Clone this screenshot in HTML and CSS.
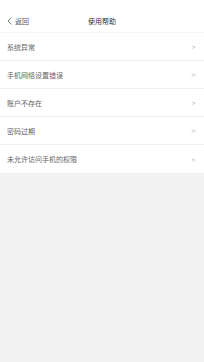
FILE: index.html
```html
<!DOCTYPE html>
<html lang="zh">
<head>
  <meta charset="UTF-8">
  <title>使用帮助</title>
  <link rel="stylesheet" href="styles.css">
</head>
<body>
  <div class="page">
    <div class="nav">
      <div class="back">
        <svg class="back-icon" width="5" height="8" viewBox="0 0 5 8"><path d="M4.2 0.6 L1 4 L4.2 7.4" fill="none" stroke="#555" stroke-width="0.8"/></svg>
        <span>返回</span>
      </div>
      <div class="title">使用帮助</div>
    </div>

    <ul class="help-list">
      <li class="help-item"><span>系统异常</span><span class="arrow">&gt;</span></li>
      <li class="help-item"><span>手机网络设置错误</span><span class="arrow">&gt;</span></li>
      <li class="help-item"><span>账户不存在</span><span class="arrow">&gt;</span></li>
      <li class="help-item"><span>密码过期</span><span class="arrow">&gt;</span></li>
      <li class="help-item"><span>未允许访问手机的权限</span><span class="arrow">&gt;</span></li>
    </ul>
  </div>
</body>
</html>
```

FILE: styles.css
```css
body {
  margin: 0;
  font-family: "Noto Sans CJK SC", "Noto Sans", sans-serif;
  background: #f2f2f2;
  color: #333;
}

.page {
  min-height: 362px;
}

.nav {
  position: relative;
  background: #fff;
  height: 22px;
  padding-top: 10px;
  border-bottom: 1px solid #f5f5f5;
  display: flex;
  align-items: center;
  justify-content: center;
}

.back {
  position: absolute;
  left: 7px;
  top: 10px;
  height: 22px;
  display: flex;
  align-items: center;
  gap: 3px;
  font-size: 7px;
  color: #555;
}

.back-icon {
  display: block;
}

.title {
  font-size: 7px;
  color: #333;
}

.help-list {
  list-style: none;
  margin: 0;
  padding: 0;
  background: #fff;
}

.help-item {
  height: 27px;
  display: flex;
  align-items: center;
  justify-content: space-between;
  padding: 0 8px 0 7px;
  font-size: 7px;
  color: #666;
  border-bottom: 1px solid #f0f0f0;
}

.help-item:last-child {
  border-bottom: none;
  height: 28px;
}

.arrow {
  color: #aaa;
  font-size: 6px;
  font-family: "DejaVu Sans", sans-serif;
}
```
